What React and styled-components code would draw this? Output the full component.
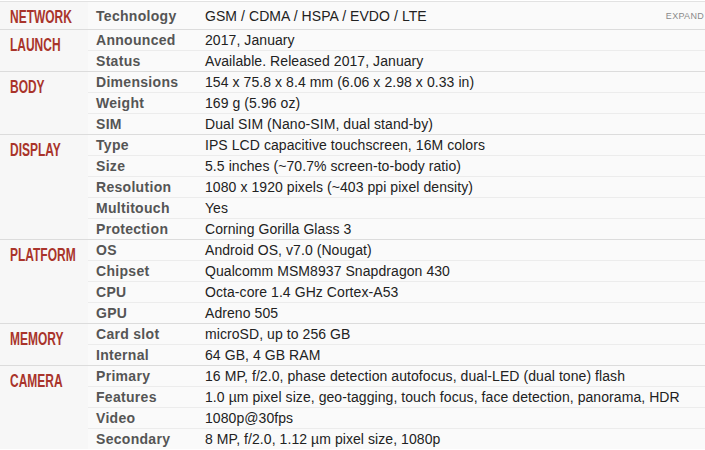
import React from 'react';
import styled, { createGlobalStyle } from 'styled-components';

const Global = createGlobalStyle`
  html, body {
    margin: 0;
    padding: 0;
    background: #fff;
  }
  body {
    font-family: "Liberation Sans", Arial, sans-serif;
    overflow: hidden;
  }
`;

const Table = styled.div`
  width: 705px;
  margin-top: 1px;
  border-top: 1px solid #e2e2e2;
  background: #fafafa;
`;

const Section = styled.div`
  display: flex;
  border-bottom: 1px solid #dcdcdc;
  &:last-child {
    border-bottom: none;
  }
`;

const Heading = styled.div`
  width: 88px;
  flex-shrink: 0;
  padding: 5px 0 0 10px;
  box-sizing: border-box;
  background: #f7f7f7;
  span {
    display: inline-block;
    font-size: 19px;
    line-height: 19px;
    font-weight: 700;
    color: #a9342b;
    transform: scaleX(0.63);
    transform-origin: left center;
    white-space: nowrap;
  }
`;

const Rows = styled.div`
  flex: 1;
  min-width: 0;
`;

const Row = styled.div`
  display: grid;
  grid-template-columns: 117px 1fr auto;
  align-items: center;
  height: ${p => (p.tall ? '27px' : '20px')};
  border-bottom: 1px solid #ececec;
  &:last-child {
    border-bottom: none;
  }
`;

const Label = styled.div`
  padding-left: 8px;
  font-size: 14px;
  font-weight: 700;
  letter-spacing: 0.3px;
  color: #555;
  white-space: nowrap;
`;

const Value = styled.div`
  font-size: 14px;
  letter-spacing: 0.07px;
  color: #222;
  white-space: nowrap;
`;

const Expand = styled.div`
  font-size: 9px;
  letter-spacing: 0.3px;
  color: #8a8a8a;
  margin-right: 1px;
`;

const specs = [
  {
    title: 'NETWORK',
    rows: [['Technology', 'GSM / CDMA / HSPA / EVDO / LTE']],
  },
  {
    title: 'LAUNCH',
    rows: [
      ['Announced', '2017, January'],
      ['Status', 'Available. Released 2017, January'],
    ],
  },
  {
    title: 'BODY',
    rows: [
      ['Dimensions', '154 x 75.8 x 8.4 mm (6.06 x 2.98 x 0.33 in)'],
      ['Weight', '169 g (5.96 oz)'],
      ['SIM', 'Dual SIM (Nano-SIM, dual stand-by)'],
    ],
  },
  {
    title: 'DISPLAY',
    rows: [
      ['Type', 'IPS LCD capacitive touchscreen, 16M colors'],
      ['Size', '5.5 inches (~70.7% screen-to-body ratio)'],
      ['Resolution', '1080 x 1920 pixels (~403 ppi pixel density)'],
      ['Multitouch', 'Yes'],
      ['Protection', 'Corning Gorilla Glass 3'],
    ],
  },
  {
    title: 'PLATFORM',
    rows: [
      ['OS', 'Android OS, v7.0 (Nougat)'],
      ['Chipset', 'Qualcomm MSM8937 Snapdragon 430'],
      ['CPU', 'Octa-core 1.4 GHz Cortex-A53'],
      ['GPU', 'Adreno 505'],
    ],
  },
  {
    title: 'MEMORY',
    rows: [
      ['Card slot', 'microSD, up to 256 GB'],
      ['Internal', '64 GB, 4 GB RAM'],
    ],
  },
  {
    title: 'CAMERA',
    rows: [
      ['Primary', '16 MP, f/2.0, phase detection autofocus, dual-LED (dual tone) flash'],
      ['Features', '1.0 µm pixel size, geo-tagging, touch focus, face detection, panorama, HDR'],
      ['Video', '1080p@30fps'],
      ['Secondary', '8 MP, f/2.0, 1.12 µm pixel size, 1080p'],
    ],
  },
];

export default function App() {
  return (
    <>
      <Global />
      <Table>
        {specs.map((s, i) => (
          <Section key={s.title}>
            <Heading>
              <span>{s.title}</span>
            </Heading>
            <Rows>
              {s.rows.map(([k, v], j) => (
                <Row key={k} tall={i === 0}>
                  <Label>{k}</Label>
                  <Value>{v}</Value>
                  {i === 0 && j === 0 ? <Expand>EXPAND</Expand> : <span />}
                </Row>
              ))}
            </Rows>
          </Section>
        ))}
      </Table>
    </>
  );
}
